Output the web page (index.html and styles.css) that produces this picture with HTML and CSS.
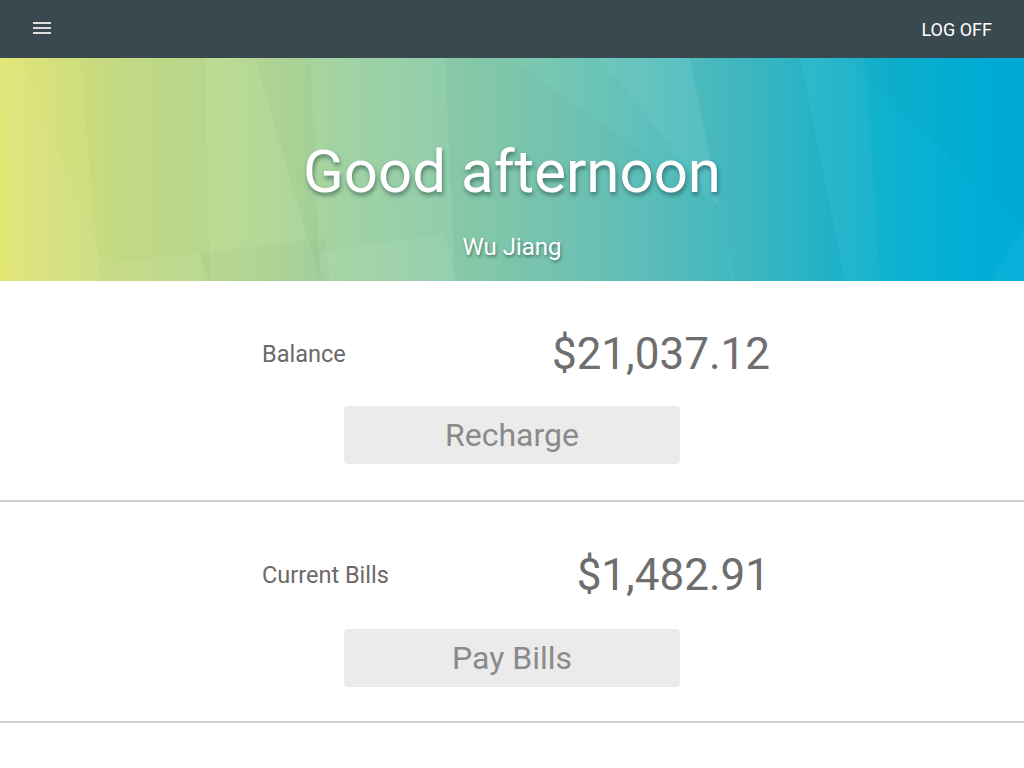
FILE: index.html
```html
<!DOCTYPE html>
<html>
<head>
<meta charset="utf-8">
<link rel="stylesheet" href="styles.css">
</head>
<body>
<header class="topbar">
  <button class="menu" aria-label="Menu">
    <svg width="18" height="14" viewBox="0 0 18 14"><rect x="0" y="1" width="18" height="2" fill="#dcdcdc"/><rect x="0" y="6" width="18" height="2" fill="#dcdcdc"/><rect x="0" y="11" width="18" height="2" fill="#dcdcdc"/></svg>
  </button>
  <span class="logoff">LOG OFF</span>
</header>
<section class="hero">
  <svg class="facets" viewBox="0 0 1024 223" preserveAspectRatio="none">
    <polygon points="0,0 20,0 110,223 10,223" fill="#ffffff" opacity="0.05"/>
    <polygon points="80,0 205,0 210,223 100,223" fill="#000000" opacity="0.015"/>
    <polygon points="100,205 200,195 210,223 105,223" fill="#ffffff" opacity="0.05"/>
    <polygon points="205,0 255,0 320,223 210,223" fill="#ffffff" opacity="0.03"/>
    <polygon points="200,195 325,180 330,223 205,223" fill="#000000" opacity="0.02"/>
    <polygon points="255,0 310,0 320,223" fill="#000000" opacity="0.015"/>
    <polygon points="315,0 445,0 455,223 320,223" fill="#ffffff" opacity="0.04"/>
    <polygon points="320,195 445,175 455,223 325,223" fill="#ffffff" opacity="0.05"/>
    <polygon points="445,0 510,0 720,150 730,223 455,223" fill="#000000" opacity="0.015"/>
    <polygon points="600,0 690,0 720,150" fill="#ffffff" opacity="0.05"/>
    <polygon points="690,0 800,0 845,223 735,223" fill="#000000" opacity="0.015"/>
    <polygon points="800,0 865,0 880,223 845,223" fill="#ffffff" opacity="0.03"/>
    <polygon points="845,0 1024,0 1024,170" fill="#000000" opacity="0.015"/>
    <polygon points="1024,170 1024,223 990,223" fill="#ffffff" opacity="0.04"/>
  </svg>
  <h1 class="greeting">Good afternoon</h1>
  <p class="name">Wu Jiang</p>
</section>
<main>
  <section class="panel">
    <div class="row">
      <span class="label">Balance</span>
      <span class="amount">$21,037.12</span>
    </div>
    <button class="action">Recharge</button>
  </section>
  <section class="panel">
    <div class="row">
      <span class="label">Current Bills</span>
      <span class="amount">$1,482.91</span>
    </div>
    <button class="action">Pay Bills</button>
  </section>
</main>
</body>
</html>
```
FILE: styles.css
```css
* { box-sizing: border-box; }
html, body { margin: 0; padding: 0; }
body {
  font-family: Roboto, "Liberation Sans", sans-serif;
  background: #ffffff;
  width: 1024px;
  height: 768px;
  overflow: hidden;
}
.topbar {
  height: 58px;
  background: #3a4950;
  display: flex;
  align-items: center;
  justify-content: space-between;
  padding: 0 32px 0 33px;
}
.menu {
  background: none;
  border: 0;
  padding: 0;
  width: 18px;
  height: 14px;
  display: flex;
  margin-top: -2px;
}
.logoff {
  color: #ffffff;
  font-size: 18px;
}
.hero {
  position: relative;
  height: 223px;
  background: linear-gradient(90deg, #e2e672 0%, #d6e07b 5%, #c6dd86 12%, #badb8f 20%, #b0d696 27%, #9fd29f 33%, #93cea6 40%, #86cbab 47%, #74c6b3 55%, #5ec0bc 63%, #42bac3 72%, #25b5c9 80%, #0eb1cf 87%, #02aed6 95%, #00acd8 100%);
  display: flex;
  flex-direction: column;
  align-items: center;
  overflow: hidden;
}
.facets {
  position: absolute;
  inset: 0;
  width: 100%;
  height: 100%;
}
.greeting {
  position: relative;
  margin: 79px 0 0;
  font-size: 60px;
  font-weight: 400;
  line-height: 70px;
  color: #ffffff;
  text-shadow: 1px 3px 4px rgba(30, 60, 60, 0.55);
}
.name {
  position: relative;
  margin: 26px 0 0;
  font-size: 24px;
  line-height: 28px;
  color: #ffffff;
  text-shadow: 1px 2px 3px rgba(30, 60, 60, 0.55);
}
.panel {
  height: 221px;
  border-bottom: 2px solid #d0d0d0;
  display: flex;
  flex-direction: column;
  align-items: center;
  padding-top: 48px;
}
.row {
  width: 508px;
  margin-left: 8px;
  display: flex;
  justify-content: space-between;
  align-items: center;
  height: 50px;
}
.label {
  font-size: 23.5px;
  color: #6a6a6a;
}
.amount {
  font-size: 44px;
  color: #6e6e6e;
}
.action {
  margin-top: 27px;
  width: 336px;
  height: 58px;
  border: 0;
  border-radius: 4px;
  background: #ebebeb;
  color: #8a8a8a;
  font-family: Roboto, "Liberation Sans", sans-serif;
  font-size: 32px;
  padding: 0;
}
.panel + .panel .action { margin-top: 29px; }
```
